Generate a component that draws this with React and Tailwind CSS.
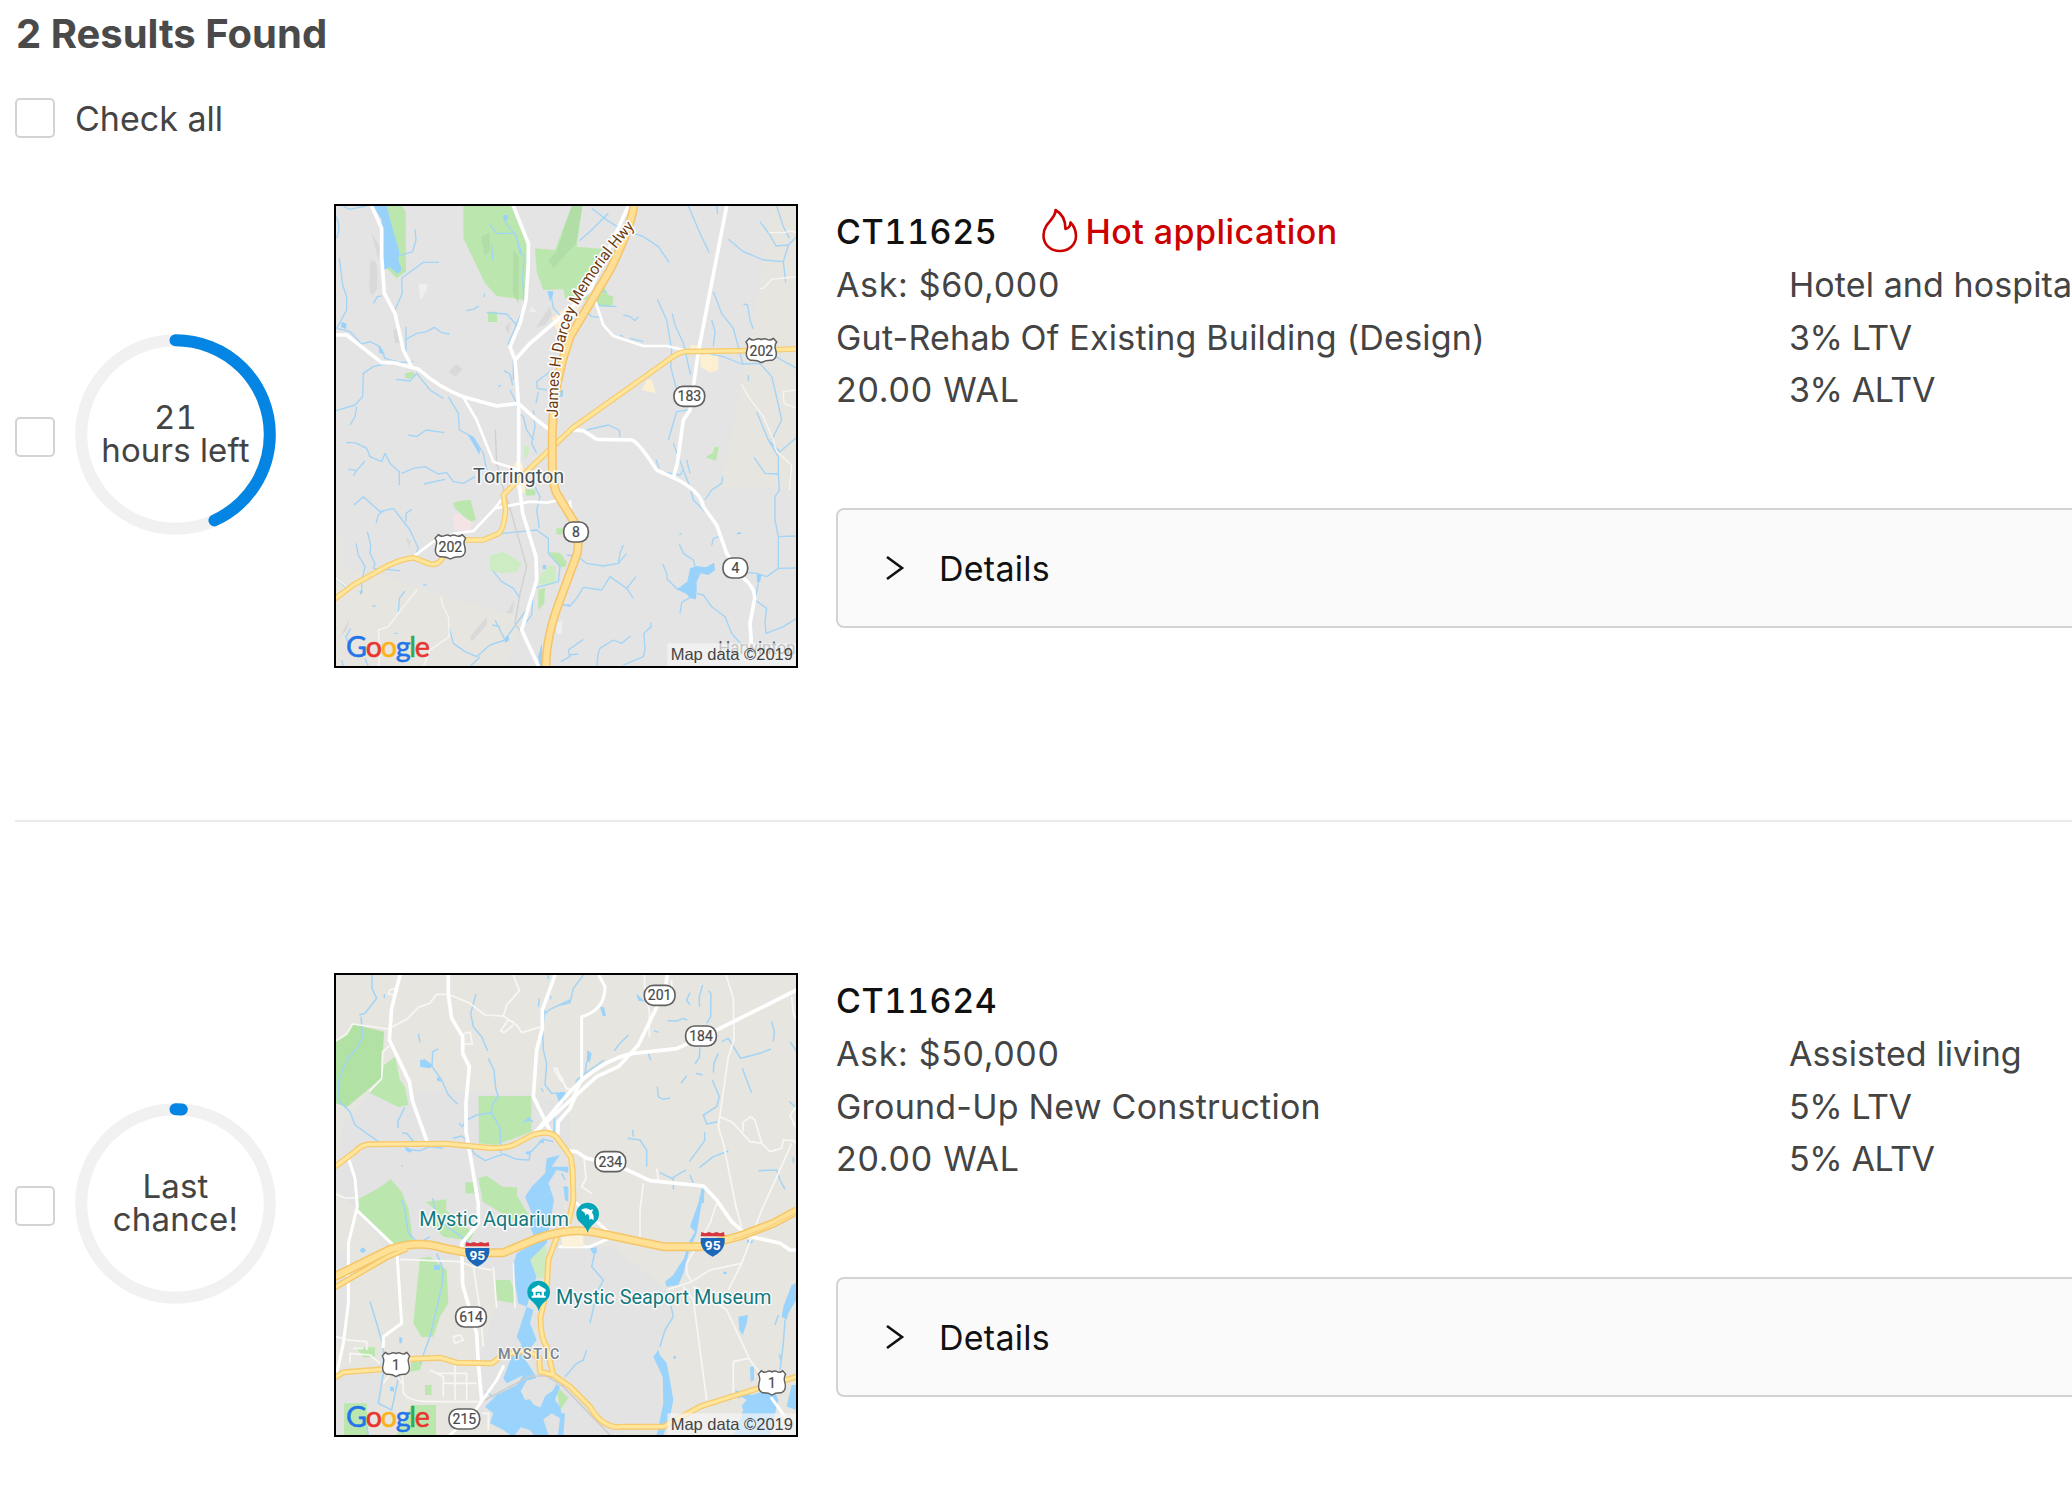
import React from "react";

const HALO = { paintOrder: "stroke" };

function Highway({ d, width = 17, inner = 10 }) {
  return (
    <g fill="none" strokeLinejoin="round">
      <path d={d} stroke="#f6ca70" strokeWidth={width} />
      <path d={d} stroke="#ffe69a" strokeWidth={inner} />
    </g>
  );
}

function Label({ x, y, w, size, color, children }) {
  return (
    <text x={x} y={y} textLength={w} lengthAdjust="spacingAndGlyphs" fontFamily="Roboto, sans-serif" fontSize={size} fill={color} stroke="#fff" strokeWidth="9" strokeOpacity="0.85" strokeLinejoin="round" style={HALO}>
      {children}
    </text>
  );
}

function RouteText({ x, y, children }) {
  return (
    <text x={x} y={y + 15} textAnchor="middle" fontFamily="Roboto, sans-serif" fontSize="42" fill="#484848" stroke="#484848" strokeWidth="0.6">
      {children}
    </text>
  );
}

function StateRoute({ x, y, w = 92, children }) {
  return (
    <g>
      <rect x={x - w / 2} y={y - 30} width={w} height="60" rx="27" fill="#fff" stroke="#616161" strokeWidth="5" />
      <RouteText x={x} y={y}>{children}</RouteText>
    </g>
  );
}

function UsRoute({ x, y, w = 92, children }) {
  const h = w / 2;
  return (
    <g>
      <g transform={`translate(${x} ${y}) scale(${h / 46} 1)`}>
        <path
          d="M-36 -37 Q-27 -29 -17 -34 Q-8 -38 0 -33 Q8 -38 17 -34 Q27 -29 36 -37 L46 -26 Q38 -16 43 -2 Q50 22 32 29 Q12 28 0 36 Q-12 28 -32 29 Q-50 22 -43 -2 Q-38 -16 -46 -26 Z"
          fill="#fff"
          stroke="#616161"
          strokeWidth="4.5"
          strokeLinejoin="round"
        />
      </g>
      <RouteText x={x} y={y}>{children}</RouteText>
    </g>
  );
}

function Interstate({ x, y }) {
  return (
    <g transform={`translate(${x} ${y})`}>
      <path d="M-34 -36 L-22 -32 L-11 -36 L0 -32 L11 -36 L22 -32 L34 -36 L36 -23 H-36Z" fill="#d8353f" />
      <path d="M-36 -18 H36 Q38 5 25 20 Q14 32 0 38 Q-14 32 -25 20 Q-38 5 -36 -18Z" fill="#1a66b8" />
      <text y="18" textAnchor="middle" fontFamily="Roboto, sans-serif" fontSize="41" fontWeight="700" fill="#fff">95</text>
    </g>
  );
}

function Attribution() {
  return (
    <g>
      <text x="48" y="1371" textLength="252" fontFamily="Lato, sans-serif" fontSize="86" strokeWidth="1.6">
        <tspan fill="#2274e8" stroke="#2274e8">G</tspan>
        <tspan fill="#e8352e" stroke="#e8352e">o</tspan>
        <tspan fill="#fbb318" stroke="#fbb318">o</tspan>
        <tspan fill="#2274e8" stroke="#2274e8">g</tspan>
        <tspan fill="#31a853" stroke="#31a853">l</tspan>
        <tspan fill="#e8352e" stroke="#e8352e">e</tspan>
      </text>
      <rect x="1012" y="1330" width="400" height="80" fill="#f5f5f5" fillOpacity="0.7" />
      <text x="1022" y="1380" textLength="367" lengthAdjust="spacingAndGlyphs" fontFamily="Liberation Sans, sans-serif" fontSize="47" fill="#444">
        Map data ©2019
      </text>
    </g>
  );
}

function TorringtonMap() {
  return (
    <svg viewBox="18 18 1380 1380" className="block size-full" aria-label="Map of Torrington">
      <defs>
        <path id="darcey" d="M683 652 C685 520 692 450 727 355 C763 265 835 170 917 77" />
      </defs>
      <rect width="1420" height="1420" fill="#e4e4e4" />
      <path d="M1328 0 L1290 250 L1235 560 L1172 862 L1380 865 L1400 930 V0Z M0 1000 L35 1010 L40 1105 L220 1145 L350 1190 L575 1252 L530 1400 L0 1400Z" fill="#e7e5e0" />
      <path d="M125 100 L150 140 L145 180 Z M120 185 Q145 170 142 230 L140 270 Q120 300 118 260Z M357 515 L378 492 L398 508 L375 530Z M190 390 L208 380 L215 430 L195 430Z M617 384 L660 318 L665 345 L645 375Z M525 380 L543 365 L535 405Z M228 1010 L242 1025 L236 1045Z M420 1310 L470 1250 L470 1275 L425 1325Z M30 1310 L60 1250 L50 1290Z M530 1240 L552 1200 L548 1240Z" fill="#d9d9d9" />
      <path d="M265 250 L293 255 L290 270 L272 300Z M605 320 L620 335 L598 337Z M680 1270 L697 1260 L695 1302 L680 1302Z" fill="#efefef" />
      <path d="M165 0 H205 L227 35 L228 215 L200 235 L165 200Z M400 0 H545 L597 140 L596 190 L585 300 L500 288 L465 250 L400 115Z M474 335 H501 V366 H474Z M225 520 L250 515 L255 525 L238 538 L225 532Z M615 145 L675 150 L725 18 L757 18 L740 140 L830 148 L770 300 L705 295 L700 268 L640 270 L620 215Z M808 258 L820 256 L835 285 L851 290 L846 321 L795 318Z" fill="#bbe7af" />
      <path d="M1155 740 L1167 742 L1158 782 L1127 772 L1148 758Z M368 910 Q395 898 422 900 L438 960 L420 965 L375 925Z M582 868 H616 V885 L590 888Z M655 1057 L690 1058 L710 1085 L708 1100 L690 1102Z M625 1170 L645 1163 L643 1210 L625 1230Z M678 985 L700 985 L696 1005 L680 1003Z" fill="#bbe7af" />
      <path d="M680 155 L725 18 L757 18 L738 130 L670 205 L655 180Z M453 110 L478 98 L480 150 L465 168Z M550 150 L567 170 L565 310 L548 280Z" fill="#b1dda6" />
      <path d="M478 1067 L520 1055 L575 1090 L560 1115 L520 1120 L480 1112Z M580 740 L595 735 L597 755 L585 782Z M635 1120 L660 1095 L678 1100 L675 1150 L640 1158 L625 1145Z" fill="#cdecc3" />
      <path d="M370 945 L380 940 L425 965 L420 995 L372 990Z" fill="#f4e4e5" />
      <path d="M665 355 L705 325 L760 300 L720 370 L690 415Z M690 350 L745 390 L690 450Z M1110 465 L1165 460 L1165 510 L1140 518 L1112 500Z M950 540 L965 538 L977 580 L935 570Z M1080 436 L1102 436 V450 L1080 450Z M555 785 L578 790 L586 880 L570 875 L540 840Z" fill="#fdf0d2" />
      <g fill="#98d2fb">
        <path d="M130 18 L170 18 L185 75 L208 155 L205 178 L215 210 L202 222 L180 202 L160 210 L150 100 L155 60Z" />
        <path d="M652 274 L670 274 L668 290 L660 302Z M520 45 H533 V60 H520Z M145 437 L158 450 L165 465 L148 458Z M35 365 L50 372 L48 388 L32 380Z M685 572 L700 570 L698 590 L685 590Z" />
        <path d="M410 700 L430 712 L450 745 L448 765 L435 740Z M1040 1168 L1072 1145 L1080 1105 L1100 1098 L1128 1102 L1152 1088 L1155 1110 L1135 1125 L1112 1120 L1100 1145 L1100 1170 L1098 1198 L1080 1195 L1070 1182Z M1280 1122 L1295 1125 L1290 1145 L1282 1150Z M1218 1003 L1228 995 L1235 1002Z M525 1312 L535 1305 L538 1320 L525 1330Z M638 1095 H648 V1108 H638Z M88 1172 H98 L96 1182 H90Z M624 1370 L636 1330 V1400 H630Z" />
      </g>
      <g fill="none" stroke="#a2d4f6" strokeWidth="4" strokeLinejoin="round">
        <path d="M18 50 Q35 80 20 115 M40 18 L58 28 L108 18 M28 175 L38 255 L50 290 L50 330 L20 385 M20 385 L60 395 L95 432 L120 425 L150 440 L165 475 L200 485 M18 632 L75 615 L98 590 L100 520 L130 500 L175 490 L250 485 M80 620 L75 650 L60 675 M130 310 L142 290 L155 288 M255 88 L258 120 L248 155 L208 167 M327 187 H280 L215 235 L217 280 L195 330 M228 380 V455 M228 418 L260 400 L290 395 L313 382 L335 398 L358 402 M198 538 L240 543 L260 520 L300 570 L340 595" />
        <path d="M355 590 L385 640 L388 690 L430 712 L460 760 L470 810 M408 332 L430 328 L447 318 M463 280 L463 292 M470 338 L530 342 L560 375 L535 430 L550 470 V540 M480 75 L500 100 L555 100 L575 160 M485 135 L488 180 M522 60 L560 110 L570 160 L582 165 L578 240 L583 320 L555 380 M522 512 L540 522 L548 555 M505 560 L513 555 M540 570 L560 610 L565 640 L580 650 L590 690 L610 720" />
        <path d="M660 515 L620 545 L622 565 L650 570 M625 575 L618 610 M610 630 L615 680 L605 730 L620 760 M665 295 L670 325 L690 345 M748 122 L785 90 L835 40 M785 25 L830 60 L870 85 L940 110 L985 140 L1018 188 M1075 18 L1110 100 L1138 158 M1160 18 L1163 42 M982 298 L1010 360 L1025 450 L1022 500 L1040 570 M1027 340 L1035 375 L1060 430 L1082 525 M1150 275 L1175 340 L1210 385 L1222 430 L1238 490 M1145 360 L1155 395 L1150 440 M1195 118 L1240 155 L1300 180 L1360 185 M1290 65 L1320 105 L1338 138 L1375 135 L1400 110 M1340 18 L1360 80 L1378 115 M1375 135 L1360 185 L1367 248 M1240 312 L1253 315 L1260 360 L1270 387" />
        <path d="M1110 455 L1180 470 L1235 492 L1290 490 L1325 530 L1335 570 L1355 660 L1325 720 M1300 445 L1355 480 L1400 505 M1255 525 V542 M1280 635 L1315 720 L1350 755 L1400 712 M1015 720 L1040 635 L1085 628 M770 690 L835 675 L868 690 L870 710 M880 410 L870 405 M880 345 L900 350 L915 362 L925 350 M810 275 L830 275 M900 415 L940 425 M765 330 L785 350 L810 352 M795 315 L860 320" />
        <path d="M48 728 L75 728 L110 745 L120 770 L155 785 L165 760 L180 790 L208 815 L208 855 M215 820 L250 805 L285 800 L325 822 L350 818 L370 845 L400 850 L435 830 M281 852 L345 838 M235 705 L260 710 L288 690 L343 698 M55 808 L80 812 L105 783 M80 812 L70 827 M72 915 L100 890 L150 935 L190 925 L240 990 L265 1045 L255 1070 M138 970 L145 945 L160 932 M245 928 L228 940 L228 965 M78 1030 L85 1065 L105 1100 L95 1145 L95 1175 M112 995 L122 1035 L120 1060 L135 1090 L130 1105 L210 1112 M20 1138 L45 1160 M225 1173 L208 1195 L205 1235" />
        <path d="M488 1112 L515 1145 L550 1165 L570 1195 M358 1285 L370 1330 L405 1355 L440 1370 L480 1335 L525 1320 L495 1260 M525 1320 L560 1270 L600 1215 L610 1165 L685 1145 L690 1100 L655 1060 L655 1015 L620 990 L520 1000 L460 1012 M487 1275 L510 1280 M615 860 L630 890 L620 930 L628 985 M610 1165 L605 1245 L585 1270 M280 1155 H290 M193 1300 H203 M127 1218 H137 M450 1370 L420 1400 M700 1215 H720 M105 1375 L115 1400 M35 1380 L40 1400 M62 1285 L48 1310 L55 1330" />
        <path d="M710 1065 L740 1068 L770 1090 L820 1098 L865 1090 L870 1060 L880 1035 M865 1090 L890 1060 M700 1215 L720 1218 L740 1195 L760 1162 L815 1170 L840 1130 L890 1165 L910 1195 M890 1165 L918 1130 M692 1385 L720 1370 L715 1350 L760 1318 M715 1365 L745 1362 M800 1400 L805 1360 L810 1345 L850 1320 L875 1330 L902 1308 M880 1395 L940 1370 L945 1350 L942 1300 L963 1280 L962 1268 M998 1092 L1010 1120 L1012 1138 L1045 1170 M1048 1032 L1060 1060 L1090 1080 L1095 1100 M1050 1240 L1055 1208 L1080 1192 M1100 1180 L1120 1185 L1145 1220 L1185 1250 L1205 1300 L1235 1335 M978 778 L990 815 L1050 825 L1060 810 L1030 730 M1060 810 L1080 860 L1090 900 L1130 940 M1080 820 L1070 780 M1125 900 L1145 870 L1175 850 L1178 830 M1145 1037 L1150 1015 L1168 1010 M1272 772 L1305 820 L1345 822 L1345 770 L1315 720 M1345 820 L1348 870 L1335 890 V960 L1345 1010 L1400 1008 M1345 1010 L1345 1105 L1310 1130 L1280 1120 L1255 1118 M1345 1105 L1400 1104 M1285 1150 L1275 1200 L1310 1225 L1305 1265 L1308 1300 L1360 1280 L1400 1255 M1048 1002 H1055" />
      </g>
      <path d="M496 690 L500 790 L515 850 L540 925 L570 1030 L590 1100 L570 1180 L555 1270 L575 1300" fill="none" stroke="#cfcfcf" strokeWidth="4" />
      <g fill="none" stroke="#f6f5f3" strokeWidth="4">
        <path d="M1316 98 L1365 98 L1378 92 L1400 98 M1290 265 L1300 265 L1325 238 L1400 230 M1235 552 L1255 590 L1300 650 L1330 720 L1340 755 L1385 795 L1378 870 M1400 570 L1360 575 L1362 610 L1400 625 M145 1400 L150 1360 L145 1290 L175 1280 L220 1220 L262 1168 M333 1190 L338 1215 L355 1250 L358 1310 L300 1350 L280 1400 M18 1135 L50 1160" />
      </g>
      <g fill="none" stroke="#ffffff" strokeWidth="11" strokeLinejoin="round" strokeLinecap="round">
        <path d="M125 18 L155 85 L155 170 L163 280 L195 340 L220 450 L245 500" />
        <path d="M18 405 H50 L155 488 H190 L265 507 Q330 565 400 590 L500 618 L565 610 L620 660 L660 690" />
        <path d="M550 18 L595 130 V190 L588 300 L570 370 L540 440 L555 480 L560 540 L566 620 V840 L578 940 L618 1070 L620 1140 L575 1290 L625 1398" />
        <path d="M555 480 L600 430 L700 345 L780 270 L895 18" />
        <path d="M795 300 L820 375 L850 408 L940 438 H1010 L1070 452" strokeWidth="8" />
        <path d="M1190 18 L1105 455 L1080 630 L1060 660 L1042 790 L1030 833" />
        <path d="M720 690 L760 692 L800 718 L905 720 Q925 725 980 810 L1030 833 Q1110 870 1120 920 L1160 975 L1190 1060 L1235 1130 Q1280 1165 1273 1200 L1260 1270 L1265 1340" />
        <path d="M400 592 L440 660 L490 785 L560 808 M250 1070 L310 1025 L375 1000 L430 993 L495 925 L525 885 M495 925 L600 905 L650 908 L690 900 M720 905 L725 960" strokeWidth="8" />
      </g>
      <Highway d="M1400 447 L1250 452 L1062 455 Q1040 460 1015 480 L730 682 L600 805 L520 885 L527 930 Q520 1000 500 1003 L460 1020 H395 M340 1070 Q325 1098 300 1092 L250 1073 Q200 1080 150 1110 L70 1155 L10 1200" />
      <g fill="none" strokeLinejoin="round">
        <path d="M912 18 Q900 90 840 210 L720 410 Q670 550 667 690 V780 Q665 850 680 880 L735 970 Q750 1000 742 1060 L690 1200 Q648 1310 648 1400" stroke="#f5c36c" strokeWidth="27" />
        <path d="M912 18 Q900 90 840 210 L720 410 Q670 550 667 690 V780 Q665 850 680 880 L735 970 Q750 1000 742 1060 L690 1200 Q648 1310 648 1400" stroke="#ffdf93" strokeWidth="18" />
      </g>
      <text fontFamily="Roboto, sans-serif" fontSize="48" fill="#6c3a10" stroke="#fff" strokeWidth="10" strokeLinejoin="round" style={HALO}>
        <textPath href="#darcey" textLength="636" lengthAdjust="spacingAndGlyphs">James H Darcey Memorial Hwy</textPath>
      </text>
      <Label x="429" y="849" w="274" size="58" color="#4c545b">Torrington</Label>
      <UsRoute x={1294} y={452}>202</UsRoute>
      <UsRoute x={361} y={1041}>202</UsRoute>
      <StateRoute x={1078} y={589}>183</StateRoute>
      <StateRoute x={738} y={996} w={74}>8</StateRoute>
      <StateRoute x={1216} y={1104} w={74}>4</StateRoute>
      <text x="1165" y="1363" textLength="232" lengthAdjust="spacingAndGlyphs" fontFamily="Roboto, sans-serif" fontSize="54" fill="#555">Harwinton</text>
      <Attribution />
    </svg>
  );
}

function MysticMap() {
  return (
    <svg viewBox="18 15 1380 1380" className="block size-full" aria-label="Map of Mystic">
      <rect width="1420" height="1420" fill="#e7e5e0" />
      <path d="M242 360 L620 372 L720 400 L720 600 L700 700 L720 830 L850 830 L1010 960 L1030 1030 L980 1160 L1000 1370 L820 1395 L660 1395 L690 1240 L540 1280 L450 1350 L450 1150 L500 1000 L490 900 L360 870 L190 870 L80 720 L18 660 V590 L45 450 L120 370Z M18 850 L60 830 L55 1010 L30 1130 L18 1130Z M18 1200 L160 1210 L150 1310 L18 1395Z" fill="#e3e3e3" />
      <g fill="#bbe7af">
        <path d="M68 162 L162 185 L155 325 L50 412 L18 400 V215 L50 195Z" fill="#b1e2a3" />
        <path d="M162 285 L195 260 L210 330 L225 350 L235 405 L205 411 L118 368 L155 325Z M445 378 H604 V485 L500 525 L447 520Z M83 688 L145 655 L182 628 L215 665 L235 715 L250 820 L190 830 L165 800 L80 720Z M405 637 H430 L435 670 L407 671Z M445 625 L470 617 L518 650 L562 652 L560 675 L600 740 L560 760 L500 720 L458 695Z M288 695 L350 688 L348 720 L430 790 L420 812 L340 800 L310 770 L315 720Z" />
        <path d="M270 865 L300 860 L350 900 L355 1000 L330 1040 L310 1100 L275 1102 L250 1060 L260 960Z M497 930 L540 930 L555 965 L550 1000 L500 990Z M78 1132 L135 1132 V1160 L100 1162Z M42 1300 L110 1300 L115 1395 L42 1395Z M245 1305 H318 V1395 H200Z M285 1245 L305 1245 V1275 H285Z M680 1255 L690 1258 L715 1285 L690 1320Z M245 1170 L278 1175 L270 1200 L240 1205Z" />
        <path d="M600 825 L650 830 L650 920 L625 925 L600 880Z" fill="#ccebc1" />
      </g>
      <g fill="#9ad3fb">
        <path d="M690 555 L650 565 L645 610 L605 650 L585 680 L610 740 L600 770 L620 815 L560 850 L548 890 L555 940 L565 1000 L590 1010 L560 1100 L575 1125 L545 1160 L520 1225 L530 1240 L580 1215 L560 1245 L500 1275 L465 1310 L490 1330 L480 1360 L520 1380 L540 1395 L690 1395 L700 1350 L690 1310 L675 1290 L690 1250 L660 1225 L620 1225 L600 1190 L580 1160 L620 1110 L600 1060 L610 1020 L590 1010 L605 960 L620 920 L600 870 L650 820 L672 690 L655 640 L680 600 L712 605 L715 590 L665 590Z" />
        <path d="M270 270 L285 268 L308 285 L300 295 L270 290Z M320 322 L335 325 L332 335 L322 332Z M678 370 L705 365 L705 385 L690 405Z M576 459 L597 440 L612 458 L597 452Z M225 530 L250 540 L240 548 L228 542Z M588 545 L605 542 L600 555 L588 552Z M625 515 L640 505 L642 520Z M918 70 L945 95 L925 92Z M810 110 L822 112 L828 138 L818 138Z M772 240 L785 250 L780 275 L770 275Z M690 365 L705 368 V395 L690 400Z M700 648 L715 650 V695 L705 690Z M690 600 L715 592 L715 608Z" />
        <path d="M1105 700 L1090 740 L1080 770 L1095 785 L1080 810 L1062 865 L1045 890 L1030 915 L1005 935 L1010 950 L1045 945 L1060 910 L1078 840 L1100 790 L1115 700Z M1115 655 L1125 655 L1118 700 H1105Z M1398 940 L1385 945 L1360 1010 L1355 1040 L1370 1050 L1375 1030 L1398 990Z M1225 1040 L1254 1035 L1250 1060 L1238 1095 L1228 1080Z M970 1160 L985 1140 L990 1155 L1010 1180 L1020 1230 L1030 1290 L1020 1340 L1000 1395 H980 L1000 1300 L998 1220Z M1260 1190 H1272 V1230 L1262 1235Z M1215 1260 L1265 1275 L1330 1255 L1345 1290 L1320 1395 L1210 1395 L1240 1320Z M1385 1245 H1400 V1320 L1370 1310Z M98 832 L108 840 L100 850 L88 842Z M312 885 H330 V900 H312Z M208 1100 L218 1105 L215 1120 L208 1120Z M180 1250 L192 1252 V1265 L180 1262Z M690 1330 L705 1330 L700 1395 H690Z M1030 1158 H1038 V1166 H1030Z M1250 810 L1272 812 L1265 820 L1252 820Z M1180 905 H1190 V912 H1180Z M1345 1150 L1352 1155 L1352 1180Z M780 835 L800 832 L800 850 L788 850Z" />
      </g>
      <path d="M1218 1290 L1235 1280 L1250 1290 L1235 1308Z" fill="#e7e5e0" />
      <path d="M572 1262 L590 1232 L650 1216 L685 1232 L668 1262 L645 1278 L632 1312 L612 1305 L600 1288 L585 1290Z M555 1395 L572 1372 L600 1380 L612 1395Z M640 1348 L665 1330 L690 1345 L684 1395 L655 1395Z" fill="#e3e3e3" />
      <g fill="none" stroke="#a2d4f6" strokeWidth="4.5" strokeLinejoin="round">
        <path d="M126 15 V55 L140 85 L105 130 L88 135 M163 72 V85 M93 140 L98 200 L80 235 L50 270 L25 335 L28 395 L60 425 L75 465 L145 515 M265 192 L270 217 M325 237 L308 245 L306 290 L335 330 L355 375 L383 403 M224 412 L203 455 L205 475 M217 488 L230 490 L255 520 M240 540 L270 542 L300 530 L340 535 M368 505 L395 498 L415 515 L432 550 L465 572 L520 552 L560 568 L598 570 L600 548 L640 508 L670 515 M387 460 L397 470 L410 450 L440 435 L485 428 L510 475 L512 550 M485 405 L505 380 L497 355 L492 300 L475 265 M438 72 L422 130 L430 170 L455 200 L473 243 M487 410 L483 428 M214 588 H218" />
        <path d="M655 15 V28 M662 78 V88 M628 85 L625 110 M640 135 L660 118 L720 90 M645 120 L638 180 L640 240 L650 280 L645 345 L665 370 L690 370 M633 355 L640 365 M673 430 V490 M695 610 L705 630 M660 650 L645 690 M760 15 L730 55 L720 98 L690 105 M770 275 L765 310 L740 330 L735 350 L705 375 M765 310 L795 290 L822 270 M895 195 L870 220 L853 242 M972 182 L985 187 M1013 152 L1040 153 L1060 145 L1072 150 M1080 68 L1070 90 L1080 105 M1118 45 L1108 80 V110 M1135 62 L1143 70 L1142 140 L1130 160 M955 250 L962 270 M1110 232 L1108 262 L1095 282 M1165 250 L1152 280 L1150 308 M1098 310 L1118 315 M1070 318 L1053 340 M982 350 L985 380 L1000 388 L1020 384 M1147 330 L1168 380 L1160 410 L1120 435 L1130 462 L1162 455 M1175 215 L1195 205 L1232 265 L1290 250 L1323 237 M1325 155 L1333 185 L1330 215 M1237 295 L1250 330 L1265 368 M1380 215 L1400 245" />
        <path d="M1124 487 V512 L1078 575 M1108 593 L1150 560 L1195 543 M893 505 L930 510 L950 540 L950 590 M908 480 L910 500 M990 608 L1025 625 L1050 610 L1068 600 M1030 625 V658 M1080 615 L1090 640 M1285 602 L1340 600 L1350 630 L1365 658 M1120 660 V700 M795 845 L785 890 L820 930 L800 970 L780 1060 M705 1220 L740 1180 L760 1170 L770 1140 M1018 985 L1030 1040 L1005 1080 L990 1130 M1335 1065 L1345 1035 M1365 1050 L1360 1120 L1350 1200 M1378 395 L1395 410 M1390 560 V580" />
        <path d="M215 690 L225 720 L235 790 L265 820 L300 800 M308 685 L315 720 L340 760 L420 820 M320 850 L340 900 L335 950 L300 1100 L270 1180 M120 995 L140 1060 L160 1130 V1210 L145 1300 L185 1320 L210 1200 M110 1370 L115 1395 M465 1265 L490 1280" />
      </g>
      <g fill="none" stroke="#f8f7f5" strokeWidth="5" strokeLinejoin="round">
        <path d="M18 212 L50 192 L68 162 L175 177 L230 148 L265 112 L300 100 L320 73 L355 73 L420 100 L465 135 L520 138 L560 165 L575 188 L635 170 M195 55 L180 60 L175 72 L198 76 M520 138 L530 105 L568 62 L550 15 M553 157 L535 150 L512 182 L522 188 L550 165 M400 192 L420 186 L427 222 L403 222 M178 228 L158 245 L155 325 L118 365 M670 295 L680 295 L710 360 M672 298 L695 335 L700 325 M18 672 L45 684 H80 M690 315 L710 355 L735 360" />
        <path d="M943 15 L945 80 L958 120 V200 M1188 15 L1210 85 L1212 210 L1195 260 L1165 470 L1180 520 L1220 720 M1170 440 L1205 455 L1260 515 L1295 520 L1275 450 L1262 440 L1238 458 L1240 485 M1295 520 L1320 545 L1355 535 L1360 510 L1390 512 L1400 520 M1385 520 L1345 610 L1295 720 L1235 880 L1195 960 M762 565 L768 625 L755 650 L785 670 M980 595 L985 630 M940 640 L930 720 L930 800 M1385 80 L1390 130 L1400 150 M1400 410 L1380 435 L1395 470 M1025 30 V55" />
        <path d="M1010 960 L1085 935 L1140 900 L1235 880 M1060 950 L1090 990 L1130 1290 M1085 935 L1070 910 L1070 880 L1140 760 L1160 700 M1090 950 L1190 1020 L1260 1170 L1290 1210 M1210 1290 L1210 1175 L1255 1165 M1215 700 L1235 770" />
        <path d="M210 868 L390 875 L430 890 L485 900 M430 890 L450 1020 L460 1130 M490 890 L500 1015 M550 880 L555 1015 M18 1100 L55 1110 L110 1115 V1140 M60 1180 V1150 L120 1155 L150 1180 M100 1135 H70 M215 1195 L220 1250 Q210 1290 290 1295 L450 1295 M300 1200 L340 1220 V1280 M320 1210 H410 V1290 M375 1180 V1290 M340 1240 H440 M370 1100 L390 1095 L400 1110 L375 1120Z M455 1330 L475 1330 V1380 M160 1240 L190 1200 L215 1240" />
      </g>
      <path d="M455 1295 L600 1218 L650 1218 L700 1250 L840 1395" fill="none" stroke="#cbcdce" strokeWidth="5" />
      <g fill="none" stroke="#ffffff" strokeWidth="11" strokeLinejoin="round" strokeLinecap="round">
        <path d="M210 15 L185 115 L178 210 L238 335 L248 395 L290 512" />
        <path d="M355 15 L355 75 L365 145 L398 200 V250 L418 290 L408 400 V485 L425 580 L445 700 V760 L395 820 L398 945 L440 1090 L445 1180 L455 1290" />
        <path d="M675 15 L637 120 V175 L620 240 L610 380 L660 482" />
        <path d="M1012 15 L1005 60 L925 225 L865 290 L800 320 L700 410 L615 488" />
        <path d="M1400 60 L1160 180 L1040 236 L910 250 Q810 270 720 365 L615 488 M740 370 L720 415 L685 455 L683 495" />
        <path d="M808 18 L825 50 Q825 120 755 140 L755 330 L730 380" strokeWidth="9" />
        <path d="M715 543 L740 545 L770 565 L860 585 L960 632 L1120 648 L1160 690 L1205 755 L1255 798 L1350 820 L1380 840 H1400" />
        <path d="M55 565 L75 625 L82 710 L55 820 V1000 L40 1120 L18 1220 M80 720 L200 835 L215 1060 L160 1100 V1130 M520 1190 L500 1230 L430 1330 L360 1395 M740 700 L850 800 L780 830 H690 M1325 1285 L1365 1340" strokeWidth="9" />
      </g>
      <path d="M695 795 H760 V830 H695Z M580 1140 L600 1130 L610 1150 L585 1160Z" fill="#fbf2dc" />
      <Highway d="M15 590 L75 545 Q95 523 120 523 L350 521 L410 527 L480 534 Q535 535 560 520 L610 494 Q660 480 680 502 L722 560 L728 600 L730 690 L715 760 M683 795 L655 870 L650 960 L632 1040 Q630 1100 650 1130 L670 1215 L720 1250 L780 1310 Q820 1380 880 1370 L1000 1370 L1110 1310 L1210 1278 L1400 1220 M670 1215 L630 1205 L628 1165 L595 1140 L520 1155 L485 1180 L380 1178 L330 1163 L240 1167 M155 1198 L40 1207 L10 1225" width={18} />
      <g fill="none" strokeLinejoin="round">
        <path d="M10 922 L180 838 Q265 810 340 834 L410 848 H520 L620 806 Q720 770 800 788 L1000 830 H1110 L1230 798 L1330 760 L1400 722" stroke="#f5c567" strokeWidth="27" />
        <path d="M15 952 L170 862 L230 836" stroke="#f5c567" strokeWidth="18" />
        <path d="M15 952 L170 862 L230 836" stroke="#ffe195" strokeWidth="10" />
        <path d="M10 922 L180 838 Q265 810 340 834 L410 848 H520 L620 806 Q720 770 800 788 L1000 830 H1110 L1230 798 L1330 760 L1400 722" stroke="#ffe195" strokeWidth="18" />
        <path d="M1210 808 L1300 778 L1400 728" stroke="#f6cd78" strokeWidth="3" />
      </g>
      <StateRoute x={989} y={76}>201</StateRoute>
      <StateRoute x={1113} y={198}>184</StateRoute>
      <StateRoute x={841} y={575}>234</StateRoute>
      <StateRoute x={423} y={1041}>614</StateRoute>
      <StateRoute x={403} y={1347}>215</StateRoute>
      <UsRoute x={198} y={1184} w={82}>1</UsRoute>
      <UsRoute x={1326} y={1239} w={82}>1</UsRoute>
      <Interstate x={442} y={852} />
      <Interstate x={1148} y={822} />
      <Label x="268" y="769" w="449" size="59" color="#12797f">Mystic Aquarium</Label>
      <Label x="678" y="1003" w="646" size="59" color="#12797f">Mystic Seaport Museum</Label>
      <text x="504" y="1168" textLength="184" fontFamily="Roboto, sans-serif" fontSize="43" fontWeight="600" fill="#7d8894" stroke="#fff" strokeWidth="7" strokeOpacity="0.8" strokeLinejoin="round" style={HALO}>
        MYSTIC
      </text>
      <g transform="translate(773 733)">
        <path d="M0 56 Q-4 40 -20 27 A34 34 0 1 1 20 27 Q4 40 0 56Z" fill="#00a6b8" />
        <path d="M-20 -13 Q-6 -23 8 -13 L17 -15 L13 -6 Q20 4 18 18 L11 13 L4 16 Q8 2 -2 -2 L-7 4 L-9 -5Z" fill="#fff" />
      </g>
      <g transform="translate(626 965)">
        <path d="M0 58 Q-4 42 -20 29 A34 34 0 1 1 20 29 Q4 42 0 58Z" fill="#00a6b8" />
        <path d="M0 -20 L21 -7 V0 H16 V12 H21 V18 H-21 V12 H-16 V0 H-21 V-7Z M-9 0 V11 H-4 V5 H4 V11 H9 V0Z" fill="#fff" fillRule="evenodd" />
      </g>
      <Attribution />
    </svg>
  );
}

function Checkbox() {
  return <span className="block size-10 shrink-0 rounded-[5px] border-2 border-[#d3d3d3] bg-white" />;
}

function TimeLeft({ lines, degrees }) {
  const length = (degrees / 360) * 2 * Math.PI * 94.3;
  return (
    <div className="relative -mt-[3px] ml-5 grid size-[201px] shrink-0 place-items-center">
      <svg viewBox="0 0 201 201" className="absolute inset-0 size-full" fill="none" strokeWidth="12">
        <circle cx="100.5" cy="100.5" r="94.3" stroke="#f1f1f1" />
        <circle cx="100.5" cy="100.5" r="94.3" stroke="#0485e3" strokeLinecap="round" strokeDasharray={`${length} 900`} transform="rotate(-90 100.5 100.5)" />
      </svg>
      <div className="relative pb-px text-center text-[33px] leading-[33px] tracking-[0.2px] whitespace-nowrap text-[#444] tabular-nums">
        {lines.map((line) => (
          <div key={line}>{line}</div>
        ))}
      </div>
    </div>
  );
}

function HotFlag() {
  return (
    <span className="ml-[45px] flex items-center text-[#cc0000]">
      <svg viewBox="0 0 36 45" className="mr-[7px] -mt-1 h-[45px] w-9" fill="none" stroke="currentColor" strokeWidth="2.6" strokeLinejoin="round">
        <path d="M13.5 2 C14 8 7.5 13 4.5 17.5 C2.3 21 1.5 24 1.5 27.5 C1.5 36.5 8.5 43 17.7 43 C27 43 34 36.5 34 28 C34 23 32 18 28.5 14.5 C28.2 18 26.5 20.5 23.5 21 C23.5 12.5 20 5.5 13.5 2Z" />
      </svg>
      <span className="tracking-[0.45px]">Hot application</span>
    </span>
  );
}

function Result({ item, last }) {
  const { Map } = item;
  return (
    <article className={last ? "flex w-[2400px] items-start pt-[151px]" : "flex w-[2400px] items-start border-b-2 border-[#ebebeb] pb-[152px]"}>
      <div className="flex h-[464px] items-center">
        <div className="mt-0.5">
          <Checkbox />
        </div>
        <TimeLeft lines={item.time} degrees={item.degrees} />
        <div className="ml-[58px] size-[464px] shrink-0 border-2 border-black">
          <Map />
        </div>
      </div>
      <div className="ml-[38px] flex-1 pt-0.5">
        <div className="flex text-[34px] leading-[52.8px] text-[#444]">
          <div className="w-[953px] shrink-0">
            <div className="flex h-[52.8px] font-medium">
              <span className="tracking-[0.6px] text-[#111] tabular-nums">{item.id}</span>
              {item.hot && <HotFlag />}
            </div>
            <div className="tracking-[0.65px]">{item.ask}</div>
            <div className="tracking-[0.22px]">{item.project}</div>
            <div className="tracking-[0.75px]">{item.wal}</div>
          </div>
          <div className="pt-[52.8px] whitespace-nowrap">
            <div className="tracking-[0.1px]">{item.type}</div>
            <div className="-tracking-[0.4px]">{item.ltv}</div>
            <div className="-tracking-[0.4px]">{item.altv}</div>
          </div>
        </div>
        <div className="mt-[91px] flex h-[120px] items-center rounded-lg border-2 border-[#d3d3d3] bg-[#fafafa] pl-[47px] text-[34px] text-[#111]">
          <svg viewBox="0 0 20 26" className="h-[26px] w-5" fill="none" stroke="currentColor" strokeWidth="2.6">
            <path d="M2 2 L17 13 L2 24" />
          </svg>
          <span className="ml-[34px] tracking-[0.25px]">Details</span>
        </div>
      </div>
    </article>
  );
}

const RESULTS = [
  {
    id: "CT11625",
    hot: true,
    time: ["21", "hours left"],
    degrees: 155.3,
    ask: "Ask: $60,000",
    project: "Gut-Rehab Of Existing Building (Design)",
    wal: "20.00 WAL",
    type: "Hotel and hospitality",
    ltv: "3% LTV",
    altv: "3% ALTV",
    Map: TorringtonMap,
  },
  {
    id: "CT11624",
    hot: false,
    time: ["Last", "chance!"],
    degrees: 3.9,
    ask: "Ask: $50,000",
    project: "Ground-Up New Construction",
    wal: "20.00 WAL",
    type: "Assisted living",
    ltv: "5% LTV",
    altv: "5% ALTV",
    Map: MysticMap,
  },
];

export default function App() {
  return (
    <main className="h-[1488px] w-full overflow-hidden bg-white pl-[15px] font-['Inter',sans-serif] text-[#444]">
      <h1 className="pt-2.5 pl-px text-[40px] leading-[48px] font-bold text-[#4a4a4a]">2 Results Found</h1>
      <label className="mt-10 mb-[66px] flex h-10 items-center gap-5 text-[34px]">
        <Checkbox />
        <span className="pt-px">Check all</span>
      </label>
      {RESULTS.map((item, i) => (
        <Result key={item.id} item={item} last={i === RESULTS.length - 1} />
      ))}
    </main>
  );
}
